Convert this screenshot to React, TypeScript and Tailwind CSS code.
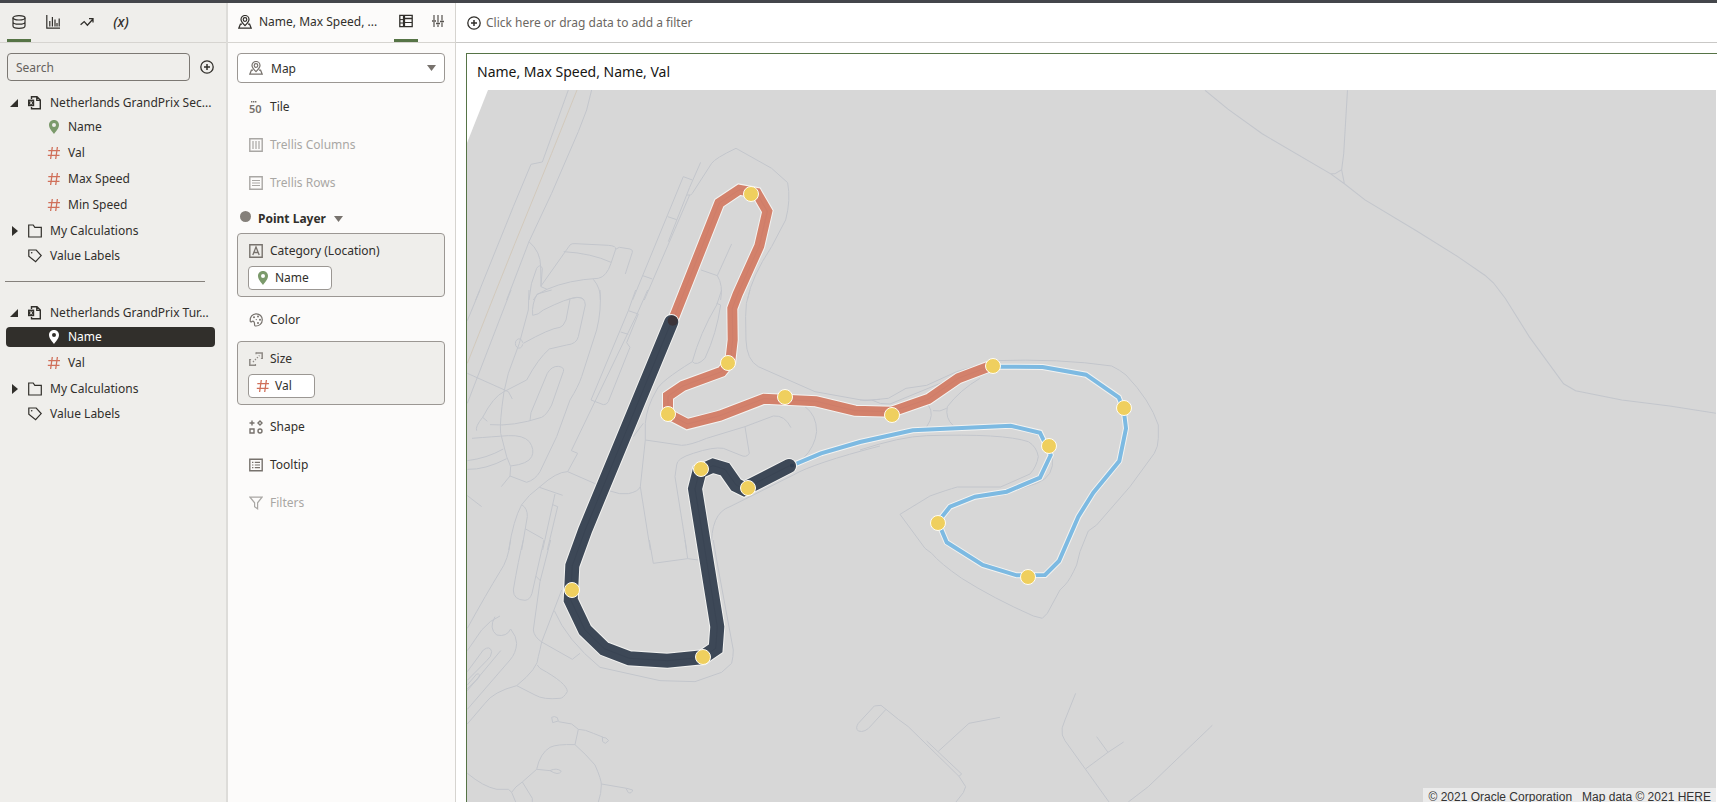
import type { ReactNode } from "react";

type IconProps = { className?: string };

function Svg({ className = "size-[14px]", children }: { className?: string; children: ReactNode }) {
  return (
    <svg viewBox="0 0 14 14" fill="none" stroke="currentColor" strokeWidth="1.2" aria-hidden="true" className={`shrink-0 ${className}`}>
      {children}
    </svg>
  );
}

const DatabaseIcon = () => (
  <Svg>
    <ellipse cx="7" cy="2.8" rx="6" ry="2.2" />
    <path d="M1 2.8v8.2c0 1.3 2.7 2.3 6 2.3s6-1 6-2.3V2.8M1 6.9c0 1.3 2.7 2.2 6 2.2s6-.9 6-2.2" />
  </Svg>
);
const ChartIcon = () => (
  <Svg>
    <path d="M.8 0v13.2H14M3.8 11.500V6M6.400 11.500V2M9 11.500V4.500M11 11.500V8M13.200 11.500V3.500" />
  </Svg>
);
const TrendIcon = () => (
  <Svg>
    <path d="M.6 9.800 4.200 6.600l3.200 3.600 5.400-6M9 3.600h4v4" strokeWidth="1.3" />
  </Svg>
);
const PlusCircleIcon = ({ className }: IconProps) => (
  <Svg className={className}>
    <circle cx="7" cy="7" r="6.200" strokeWidth="1.300" />
    <path d="M7 4v6M4 7h6" strokeWidth="1.500" />
  </Svg>
);
const FileIcon = () => (
  <Svg>
    <path d="M3.500 3V.8h5.500L12.300 4v8.800H3.500V11M8.800.8v3.600h3.500" strokeWidth="1.400" />
    <rect x="0" y="3.600" width="6.200" height="6.600" fill="currentColor" stroke="none" />
    <path d="M2 5.200l2.300 3.300M4.300 5.200 2 8.500" stroke="#efeeeb" strokeWidth=".9" />
  </Svg>
);
const PinIcon = ({ className }: IconProps) => (
  <Svg className={className}>
    <path
      d="M7 0C4 0 2 2.200 2 5c0 3.300 3.200 6.500 5 9 1.800-2.500 5-5.700 5-9 0-2.800-2-5-5-5Zm0 7a2 2 0 1 1 0-4 2 2 0 0 1 0 4Z"
      fill="currentColor"
      stroke="none"
      fillRule="evenodd"
    />
  </Svg>
);
const HashIcon = () => (
  <Svg className="size-[14px] text-[#d0705a]">
    <path d="M5.300 1 3.600 13M10.400 1 8.700 13M1.300 4.700h11.700M.8 9.300h11.700" strokeWidth="1.300" />
  </Svg>
);
const FolderIcon = () => (
  <Svg>
    <path d="M.7 13V1h4.500l1.600 2.400h6.500V13Z" />
  </Svg>
);
const TagIcon = () => (
  <Svg>
    <path d="M.8 1h7.400l5 5.600-5.600 6-6.800-5.400Z" />
    <circle cx="3.700" cy="3.800" r=".8" fill="currentColor" stroke="none" />
  </Svg>
);
const MapPinIcon = () => (
  <Svg>
    <path d="M7 10.600C5 8.600 3 6.700 3 4.500a4 4 0 0 1 8 0c0 2.200-2 4.100-4 6.100Z" />
    <circle cx="7" cy="4.500" r="1.800" />
    <path d="M4 9.200H2.400L.8 13.200h12.400l-1.600-4H10" />
  </Svg>
);
const GrammarIcon = () => (
  <Svg>
    <path d="M.8 1.400h12.400v11.200H.8ZM5 4.500h8.200" strokeWidth="1.300" />
    <path d="M5 1.400v11.200" strokeWidth="2.200" />
    <path d="M1 5.600h3M1 9h3M6 8.500h7" strokeWidth="1" />
  </Svg>
);
const SlidersIcon = () => (
  <Svg className="size-[14px] text-[#55524e]">
    <path d="M3 1v5M3 8v5M7 1v7.500M7 10.500V13M11 1v5.500M11 8.500V13" strokeWidth="1.200" />
    <path d="M1 7h4M5 9.500h4M9 7.500h4" strokeWidth="1.400" />
  </Svg>
);
const TileIcon = () => (
  <svg viewBox="0 0 14 14" aria-hidden="true" className="size-[14px] shrink-0 text-[#77726d]">
    <path d="M2 1.700h5.400" stroke="currentColor" strokeWidth="1.400" strokeDasharray="1.400 .6" />
    <text x="0" y="12.500" fill="currentColor" className="font-['Noto_Sans',sans-serif] text-[11px] font-semibold">
      50
    </text>
  </svg>
);
const ColumnsIcon = () => (
  <Svg>
    <path d="M.8.8h12.400v12.400H.8Z" strokeWidth="1.400" />
    <path d="M4 3v8M7 3v8M10 3v8" />
  </Svg>
);
const RowsIcon = () => (
  <Svg>
    <path d="M.8.8h12.400v12.400H.8Z" strokeWidth="1.400" />
    <path d="M3 4.500h8M3 7h8M3 9.500h8" />
  </Svg>
);
const CategoryIcon = () => (
  <Svg>
    <path d="M.8.8h12.400v12.400H.8Z" strokeWidth="1.400" />
    <path d="m3.800 11 3.200-8 3.200 8M5 8.500h4" strokeWidth="1.300" />
  </Svg>
);
const PaletteIcon = () => (
  <Svg>
    <path d="M1.300 8.500C.7 4 3.500.8 7.300.8c3.400 0 6 2.600 6 6 0 3.600-3 6.500-7 6.200-1.200-.2-.5-1.700-.9-3.200-.4-1.500-1.400-1.900-2.400-1.300-.6.500-1.500.6-1.700 0Z" />
    <g fill="currentColor" stroke="none">
      <circle cx="5" cy="4.300" r="1" />
      <circle cx="9" cy="3.600" r="1" />
      <circle cx="11" cy="6.800" r="1" />
      <circle cx="9" cy="10" r="1" />
      <circle cx="7.300" cy="6.600" r=".7" />
    </g>
  </Svg>
);
const SizeIcon = () => (
  <Svg className="size-[14px] opacity-80">
    <path d="M7 .9h6.200V7M.8 7v6.200H7" strokeWidth="1.500" />
    <path d="M7 .2v2M13.900 6.500h-2M.1 7.500h2M6.500 13.900v-2" strokeWidth="1.100" />
    <path d="m4 10 6.500-6.500" strokeWidth="1.400" strokeDasharray="1.300 1.500" />
  </Svg>
);
const ShapeIcon = () => (
  <Svg>
    <path d="M3 .5v5M.5 3h5M1 9h4v4H1ZM11 1l2 2-2 2-2-2Z" strokeWidth="1.400" />
    <circle cx="11" cy="11" r="2" strokeWidth="1.400" />
  </Svg>
);
const TooltipIcon = () => (
  <Svg>
    <path d="M.8 1.300h12.400v11.400H.8Z" strokeWidth="1.400" />
    <path d="M3 4.300h1.400M3 7h1.400M3 9.700h1.400M5.800 4.300H11M5.800 7H11M5.800 9.700H11" />
  </Svg>
);
const FunnelIcon = () => (
  <Svg>
    <path d="M1 1.200h12L8.600 6.800v6L5.600 10.800v-4Z" />
  </Svg>
);
const CaretDown = ({ className = "" }: IconProps) => (
  <svg viewBox="0 0 9 6" aria-hidden="true" className={`h-[6px] w-[9px] shrink-0 ${className}`}>
    <path d="M0 0h9L4.500 6Z" fill="#77726d" />
  </svg>
);

function TreeNode({ open, icon, label, root }: { open?: boolean; icon: ReactNode; label: string; root?: boolean }) {
  return (
    <button type="button" className={`flex w-full items-center gap-2 pl-[10px] text-left ${root ? "h-[23px]" : "h-[25px]"}`}>
      <svg viewBox="0 0 10 10" aria-hidden="true" className="size-[10px] shrink-0">
        {open === true && <path d="M8 1v8H0Z" fill="#312f2b" />}
        {open === false && <path d="M2 0v10l6-5Z" fill="#312f2b" />}
      </svg>
      {icon}
      <span className="whitespace-nowrap">{label}</span>
    </button>
  );
}

function Field({ kind, label, selected }: { kind: "pin" | "hash"; label: string; selected?: boolean }) {
  return (
    <div className="flex h-[26px] items-center pr-[11px] pl-[6px]">
      <button
        type="button"
        className={`flex h-5 flex-1 items-center gap-[7px] rounded-[4px] pl-[41px] text-left ${selected ? "bg-[#312f2b] text-white" : ""}`}
      >
        {kind === "pin" ? <PinIcon className={selected ? "size-[14px] text-white" : "size-[14px] text-[#7b9a6b]"} /> : <HashIcon />}
        {label}
      </button>
    </div>
  );
}

function DataPanel() {
  const tabs = [
    { name: "Data", icon: <DatabaseIcon />, active: true },
    { name: "Visualizations", icon: <ChartIcon /> },
    { name: "Analytics", icon: <TrendIcon /> },
    { name: "Parameters", icon: <span className="text-[14px] font-medium italic">(x)</span> },
  ];
  return (
    <aside className="flex w-[228px] shrink-0 flex-col border-r-2 border-[#dddcd9] bg-[#efeeeb]">
      <div className="flex h-10 shrink-0 gap-[10px] border-b border-[#d6d4d0] pl-[7px]">
        {tabs.map((t) => (
          <button
            key={t.name}
            type="button"
            aria-label={t.name}
            className={`flex h-[39px] w-6 items-center justify-center border-b-[3px] pt-px ${t.active ? "border-[#567446]" : "border-transparent"}`}
          >
            {t.icon}
          </button>
        ))}
      </div>
      <div className="flex items-center gap-[10px] pt-[10px] pl-[7px]">
        <input
          type="search"
          aria-label="Search"
          placeholder="Search"
          className="h-7 w-[183px] rounded-[4px] border border-[#7c7873] bg-transparent px-2 outline-none placeholder:text-[#65615c]"
        />
        <button type="button" aria-label="Add data">
          <PlusCircleIcon />
        </button>
      </div>
      <div className="pt-[10px]">
        <TreeNode open root icon={<FileIcon />} label="Netherlands GrandPrix Sec..." />
        <Field kind="pin" label="Name" />
        <Field kind="hash" label="Val" />
        <Field kind="hash" label="Max Speed" />
        <Field kind="hash" label="Min Speed" />
        <TreeNode open={false} icon={<FolderIcon />} label="My Calculations" />
        <TreeNode icon={<TagIcon />} label="Value Labels" />
      </div>
      <hr className="mt-[13px] mr-[21px] mb-[19px] ml-[5px] border-[#85817c]" />
      <div>
        <TreeNode open root icon={<FileIcon />} label="Netherlands GrandPrix Tur..." />
        <Field kind="pin" label="Name" selected />
        <Field kind="hash" label="Val" />
        <TreeNode open={false} icon={<FolderIcon />} label="My Calculations" />
        <TreeNode icon={<TagIcon />} label="Value Labels" />
      </div>
    </aside>
  );
}

function Drop({ icon, label, muted }: { icon: ReactNode; label: string; muted?: boolean }) {
  return (
    <div className={`flex h-[38px] items-center gap-[7px] pl-3 ${muted ? "text-[#a9a7a4]" : ""}`}>
      <span className={muted ? "" : "text-[#77726d]"}>{icon}</span>
      {label}
    </div>
  );
}

function FilledDrop({ icon, label, children }: { icon: ReactNode; label: string; children: ReactNode }) {
  return (
    <div className="h-16 rounded-[4px] border border-[#9b9793] bg-[#efeeeb] pt-[7px] pl-[10px]">
      <div className="flex h-5 items-center gap-[7px] pl-px">
        <span className="text-[#77726d]">{icon}</span>
        {label}
      </div>
      <div className="mt-[5px] flex">{children}</div>
    </div>
  );
}

function Chip({ icon, label }: { icon: ReactNode; label: string }) {
  return (
    <button type="button" className="flex h-6 items-center gap-[5px] rounded-[4px] border border-[#9b9793] bg-white pr-[22px] pl-[7px]">
      {icon}
      {label}
    </button>
  );
}

function GrammarPanel() {
  return (
    <section className="flex w-[228px] shrink-0 flex-col border-r border-[#d6d4d0] bg-[#fcfbfa]">
      <div className="flex h-10 shrink-0 border-b border-[#d6d4d0] pr-[5px] pl-[10px]">
        <div className="flex h-[39px] min-w-0 flex-1 items-center gap-[7px] pt-px pb-[3px]">
          <MapPinIcon />
          <span className="whitespace-nowrap">Name, Max Speed, ...</span>
        </div>
        <button type="button" aria-label="Grammar" className="flex h-[39px] w-6 items-center justify-center border-b-[3px] border-[#567446]">
          <GrammarIcon />
        </button>
        <button type="button" aria-label="Properties" className="ml-2 flex h-[39px] w-6 items-center justify-center border-b-[3px] border-transparent">
          <SlidersIcon />
        </button>
      </div>
      <div className="pt-[10px] pr-[10px] pl-[9px]">
        <div className="relative mb-[5px]">
          <select aria-label="Visualization type" className="h-[30px] w-full appearance-none rounded-[4px] border border-[#9b9793] bg-white pt-px pl-[33px] outline-none">
            <option>Map</option>
          </select>
          <span className="pointer-events-none absolute top-2 left-3 text-[#77726d]">
            <MapPinIcon />
          </span>
          <CaretDown className="pointer-events-none absolute top-3 right-[9px]" />
        </div>
        <Drop icon={<TileIcon />} label="Tile" />
        <Drop icon={<ColumnsIcon />} label="Trellis Columns" muted />
        <Drop icon={<RowsIcon />} label="Trellis Rows" muted />
        <button type="button" className="flex h-[31px] items-center pt-0.5 pl-[3px] font-bold">
          <span className="mr-[7px] mb-1 size-[11px] rounded-full bg-[#85807a]" />
          Point Layer
          <CaretDown className="ml-2" />
        </button>
        <FilledDrop icon={<CategoryIcon />} label="Category (Location)">
          <Chip icon={<PinIcon className="size-[14px] text-[#7b9a6b]" />} label="Name" />
        </FilledDrop>
        <div className="pt-1 pb-0.5">
          <Drop icon={<PaletteIcon />} label="Color" />
        </div>
        <FilledDrop icon={<SizeIcon />} label="Size">
          <Chip icon={<HashIcon />} label="Val" />
        </FilledDrop>
        <div className="pt-[3px]">
          <Drop icon={<ShapeIcon />} label="Shape" />
          <Drop icon={<TooltipIcon />} label="Tooltip" />
          <Drop icon={<FunnelIcon />} label="Filters" muted />
        </div>
      </div>
    </section>
  );
}

// Base map roads, one tile each; tile drawings use their own units.
const roadTiles = [
  {
    transform: "translate(-12 -90) scale(.3333)",
    d: "M340 270 262 486 228 493 175 620 62 900M410 270 395 330 370 395 290 580 222 725 155 900M222 725q35 30 35 75L258 860 276 868M258 858 345 735Q350 730 360 731L460 736Q485 738 482 748L468 790Q455 830 430 835 340 840 276 868L246 884 235 900M326 755Q410 760 468 787M482 748 493 742 525 747Q535 750 532 757L511 822M258 860 262 805Q255 790 245 805 225 850 222 900M415 838Q438 865 436 900M335 900Q375 885 388 900M737 487 704 562 640 725M712 540 685 530 533 900M568 900 704 585M696 585Q710 588 712 580L770 490Q780 475 843 445L950 505 998 548Q1008 600 992 660L950 740Q890 830 877 900M638 650 665 659M563 827 592 837M830 732 787 827 738 810M787 827Q805 855 797 900",
  },
  {
    transform: "translate(-7 200) scale(.3333)",
    d: "M60 0 22 92M153 0 22 340M527 0 505 62 393 330 430 344Q440 345 445 335L510 172 500 158 535 72M563 0 530 75 334 482 353 490 323 545M505 62 535 72M482 126 505 133M420 0Q425 60 410 120L365 260Q355 290 330 330L290 440 240 545Q225 570 200 577L150 558M207 0 205 60 178 160 145 250 132 305Q118 400 122 430L140 500 152 530 150 558 124 590M218 76Q235 75 250 60 320 25 350 22 375 20 376 45L355 140Q350 162 320 165L268 177Q235 205 200 270L132 305Q100 320 68 382 45 410 50 422M275 0 232 12Q215 40 218 76M330 28 318 90Q310 110 300 112 270 115 190 160M188 158A11 14 0 1 0 188 163M22 250 145 305 157 327M210 392 213 368 262 250Q275 228 295 229 315 232 310 245L275 345Q260 375 245 382 160 410 90 404M68 382 82 394M36 445Q100 440 145 437 190 435 208 455 225 480 215 500 205 522 152 528M22 512Q80 505 130 477M22 538Q75 540 140 506M22 617 65 650M238 592 308 616M285 612 248 780M278 644 293 650 262 780M185 644Q203 655 202 680L185 780M195 716 250 747M146 780Q160 690 185 644 205 615 240 590 290 545 323 545L403 580 450 603Q480 615 505 611 535 605 541 590M785 0 770 45Q720 130 697 215 710 230 735 205 770 130 782 45L770 40M697 215Q600 275 590 300 560 350 556 400L556 450 541 590 571 780M556 450 665 466Q690 466 740 445L855 410 940 378Q975 375 993 413M855 410 868 490Q860 505 840 495L790 475Q760 470 700 490 650 505 650 525L645 560 680 780M550 400 520 440M870 0Q855 40 857 80L858 150Q860 210 895 230L1065 305 1215 332 1260 328M1035 350Q1070 375 1070 425 1065 470 1030 505M755 780Q750 670 810 650L1000 555Q1060 520 1260 468",
  },
  {
    transform: "translate(-7 450) scale(.3333)",
    d: "M152 0Q145 60 120 95 80 160 22 265M190 0Q175 60 160 150 160 180 195 181 210 180 216 160L252 0M272 0 240 125 220 270Q222 290 245 306L337 358 360 340M227 108 242 123M305 150 245 306Q240 330 235 350 235 385 170 437 100 455 75 490L22 552M283 212Q320 300 420 382L600 422 705 425 785 397 815 370Q820 350 820 330L770 60 760 0M232 375 240 385Q322 430 322 455 310 475 300 475 250 480 225 465L170 437M22 332 65 270Q90 240 120 228M105 230Q85 265 110 285 140 292 152 267 170 290 170 310 168 340 150 360L22 508M22 395 70 330Q90 315 95 335 95 350 80 362L22 421M122 332 22 452M22 435 50 402Q64 400 55 415L22 446M568 0 580 70 683 56 715 60M675 0 683 56M22 700Q70 740 110 748L145 748 155 757 167 786M155 757Q165 740 187 726L217 775 217 786M187 726 230 688Q240 640 270 622 290 612 345 614L355 568 335 552 295 545M275 532 278 548 295 543 292 533Q283 527 275 532M355 568Q375 568 400 580L430 592M427 592 428 605 436 610 446 602 438 594ZM345 614Q380 645 405 675 425 720 424 735L422 760 415 786M424 732 500 745 518 750Q515 762 505 758L498 745M230 688 270 692Q290 682 304 694 295 708 270 692",
  },
  {
    transform: "translate(393 250) scale(.3333)",
    d: "M0 180 35 180 85 175 138 145 200 136 290 95 400 62Q600 55 755 78 780 90 798 105 870 180 895 255L895 295Q895 320 883 340L810 440 710 555 685 573 660 635 650 675Q630 720 615 735L600 750 562 820 547 835 520 828Q400 775 305 715 240 670 215 640L195 625 120 523 210 468Q260 450 292 441L422 441 510 402Q530 380 535 350 530 320 505 305 430 280 200 287 120 290 0 330M35 180Q60 195 90 192L290 110M205 195Q225 225 200 260M219 212Q240 217 260 205M360 115Q300 150 262 200 255 235 280 257M577 350Q585 410 530 430L440 460",
  },
  {
    transform: "translate(353 510) scale(.3333)",
    d: "M198 328 183 316 163 318 115 370Q105 385 115 393 135 400 155 375L198 328 235 358 265 380 417 529 425 522 320 423M417 529 437 560 430 578 408 606M355 454 447 370 540 352M767 280 735 360Q722 385 727 405L735 422 867 606M798 506 864 457 911 426M830 410 864 457M1177 376 985 560 925 606",
  },
  {
    transform: "translate(713 -10) scale(.3425)",
    d: "M73 30 140 85 240 157 440 274 480 303 540 350 690 440 810 515 890 570 915 592 950 638 1020 750 1120 887 1155 907 1290 934 1430 952 1565 973 1900 1020M489 30 478 215 472 262 452 274 440 274M472 262 480 303",
  },
];

const sectors = [
  {
    color: "#d3816b",
    inner: "#c9796a",
    width: 10,
    d: "M673 320 719.300 203 739.300 189.700 756.700 193 767.300 211.300 759.300 246 737.500 294.500 732.300 308.300 732.700 340 730.300 361 721.700 371.700 682.700 386 668 396 668 414 687.300 424 720 415.700 764 398.700 816 401.300 855 410.700 891.700 411.700 928.300 399 958.300 378.300 986.700 367.500 992 366",
  },
  {
    color: "#7dbae2",
    inner: "#7dbae2",
    width: 4,
    d: "M792 465.500 821 453.300 860 442 912.700 430.300 1010.700 425.700 1040 432.700 1050.700 455 1040 477.700 1006.700 491.700 975 496.700 950 506.700 938 521.700 946.700 542.300 982.700 565 1016.700 575.300 1045 575 1059 561 1078.300 516.700 1093.300 492.700 1119.300 461 1126 428.300 1123.700 410 1118.700 397.300 1086 374.700 1042.700 367 995 366.700",
  },
  {
    color: "#3d4857",
    inner: "#354050",
    width: 14,
    d: "M671.300 322 585 530.500 572.300 565.700 570.700 600 585 630 604.300 648.700 629.300 658.300 667.300 660.700 702.700 657.300 715.700 648.300 717.300 626.700 695 488.700 699.300 471.700 713 465.700 725 469.300 736 485 744 489 789 466",
  },
];

const turns = [
  [751, 194], [728, 363], [668, 414], [785, 397], [701, 469], [748, 488], [572, 590],
  [703, 657], [892, 415], [993, 366], [1124, 408], [1049, 446], [938, 523], [1028, 577],
];

function TrackMap() {
  return (
    <svg role="img" aria-label="Track map" className="block size-full bg-[#d7d7d7]">
      <path d="M0 0H21L0 53Z" fill="#fff" />
      <g fill="none" stroke="#c3c6cc" strokeWidth="3">
        {roadTiles.map((t) => (
          <path key={t.transform} transform={t.transform} d={t.d} />
        ))}
        <path transform="translate(-12 -90) scale(.3333)" d="M366 270 290 460 180 730 120 880 37 1090" stroke="#d2c9bc" />
      </g>
      <g transform="translate(-467 -90)" fill="none">
        {sectors.map((s) => (
          <g key={s.color} strokeLinecap="round">
            <path d={s.d} stroke="#f3f3f1" strokeWidth={s.width + 2} />
            <path d={s.d} stroke={s.color} strokeWidth={s.width} />
            <path d={s.d} stroke={s.inner} strokeWidth="1" opacity=".5" />
          </g>
        ))}
        <circle cx="672.700" cy="320.700" r="5" fill="#3b3439" />
        <circle cx="792" cy="465.500" r="2" fill="#2f3e52" />
        {turns.map(([x, y]) => (
          <circle key={`${x}-${y}`} cx={x} cy={y} r="7.500" fill="#efcf5e" stroke="#fffdf5" />
        ))}
      </g>
    </svg>
  );
}

export default function App() {
  return (
    <div className="flex h-screen flex-col overflow-hidden border-t-[3px] border-[#44464b] bg-white font-['Noto_Sans',sans-serif] text-[12px] leading-4 text-[#312f2b]">
      <div className="flex min-h-0 flex-1">
        <DataPanel />
        <GrammarPanel />
        <main className="flex min-w-0 flex-1 flex-col">
          <div className="flex h-10 shrink-0 items-center border-b border-[#c9c8c6] pt-px pl-[11px]">
            <button type="button" className="flex items-center gap-[5px] text-[#6b6762]">
              <PlusCircleIcon className="size-[14px] text-[#312f2b]" />
              Click here or drag data to add a filter
            </button>
          </div>
          <section className="mt-[10px] ml-[10px] flex min-h-0 flex-1 flex-col border-t border-l border-[#567446]">
            <h2 className="h-9 shrink-0 pl-[10px] text-[14px] leading-9 text-[#161513]">Name, Max Speed, Name, Val</h2>
            <div className="relative mr-px min-h-0 flex-1">
              <TrackMap />
              <div className="absolute right-0 bottom-0 flex h-[14px] items-start gap-[10px] bg-[#ebebeb] px-[5px] pt-px font-['Liberation_Sans',sans-serif] text-[12px] text-[#333]">
                <span>© 2021 Oracle Corporation</span>
                <span>Map data © 2021 HERE</span>
              </div>
            </div>
          </section>
        </main>
      </div>
    </div>
  );
}
